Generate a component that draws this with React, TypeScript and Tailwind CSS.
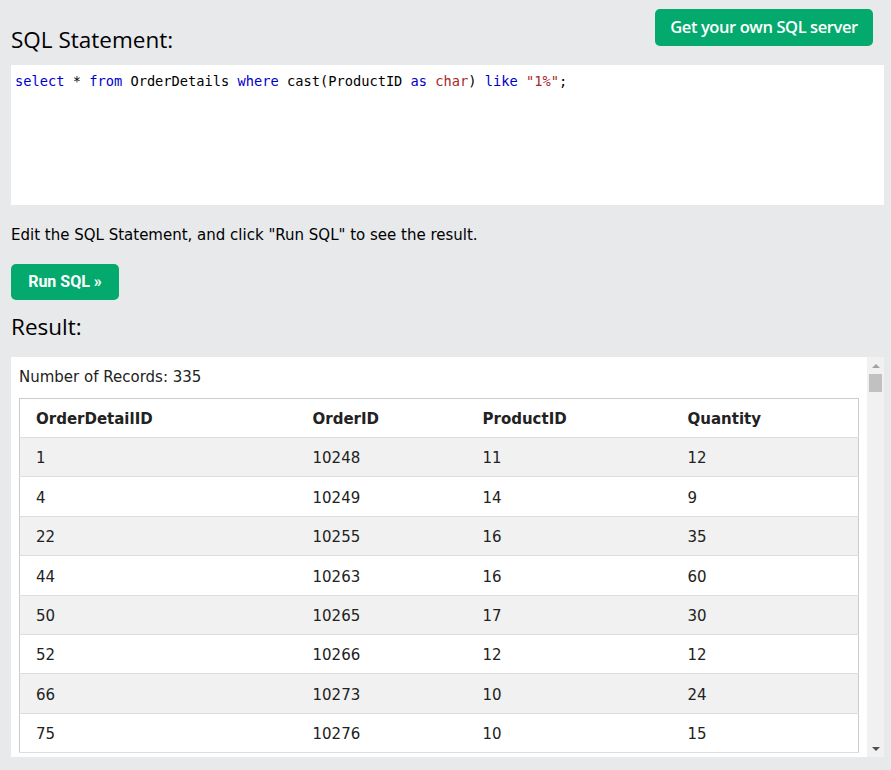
const rows = [
  ["1", "10248", "11", "12"],
  ["4", "10249", "14", "9"],
  ["22", "10255", "16", "35"],
  ["44", "10263", "16", "60"],
  ["50", "10265", "17", "30"],
  ["52", "10266", "12", "12"],
  ["66", "10273", "10", "24"],
  ["75", "10276", "10", "15"],
];

const verdana = { fontFamily: "Verdana, 'DejaVu Sans', sans-serif" };

export default function App() {
  return (
    <div className="min-h-[770px] bg-[#e7e9eb] pl-[11px] pr-[7px] text-black" style={verdana}>
      <div className="flex justify-between h-[56px]">
        <h2 className="mt-[23px] text-[22.5px] leading-[33px] font-normal" style={{ fontFamily: "'Open Sans', sans-serif" }}>
          SQL Statement:
        </h2>
        <button
          className="mt-[9px] mr-[11px] h-[37px] w-[218px] rounded-[5px] bg-[#04aa6d] text-white text-[16.5px] font-semibold tracking-[-0.4px]"
          style={{ fontFamily: "'Open Sans', sans-serif" }}
        >
          Get your own SQL server
        </button>
      </div>

      <div className="mt-[9px] h-[140px] bg-white px-[4px] pt-[7px] text-[13.7px] leading-[18px]" style={{ fontFamily: "'DejaVu Sans Mono', 'Liberation Mono', monospace" }}>
        <span className="text-[#0000cd]">select</span> * <span className="text-[#0000cd]">from</span> OrderDetails{" "}
        <span className="text-[#0000cd]">where</span> cast(ProductID <span className="text-[#0000cd]">as</span>{" "}
        <span className="text-[#a52a2a]">char</span>) <span className="text-[#0000cd]">like</span>{" "}
        <span className="text-[#a52a2a]">"1%"</span>;
      </div>

      <p className="mt-[20px] text-[15px] leading-[20px]">Edit the SQL Statement, and click "Run SQL" to see the result.</p>

      <button
        className="mt-[19px] h-[36px] w-[108px] rounded-[5px] bg-[#04aa6d] text-white text-[16px] font-bold"
        style={{ fontFamily: "Roboto, sans-serif" }}
      >
        Run SQL »
      </button>

      <h2 className="mt-[10px] text-[22.5px] leading-[33px]" style={{ fontFamily: "'Open Sans', sans-serif" }}>
        Result:
      </h2>

      <div className="mt-[14px] h-[400px] bg-white flex overflow-hidden">
        <div className="flex-1 pl-[8px] pr-[8px] pt-[10px] overflow-hidden">
          <p className="text-[15px] leading-[20px] text-[#222]">Number of Records: 335</p>
          <table className="mt-[11px] w-[840px] border border-[#cccccc] border-collapse text-[15px] text-[#222]">
            <thead>
              <tr className="h-[39px] border-b border-[#dddddd]">
                <th className="w-[277px] pl-[16px] pt-[2px] text-left font-bold">OrderDetailID</th>
                <th className="w-[170px] pl-[16px] pt-[2px] text-left font-bold">OrderID</th>
                <th className="w-[205px] pl-[16px] pt-[2px] text-left font-bold">ProductID</th>
                <th className="pl-[16px] pt-[2px] text-left font-bold">Quantity</th>
              </tr>
            </thead>
            <tbody>
              {rows.map((r, i) => (
                <tr key={i} className={`h-[39.4px] border-b border-[#dddddd] ${i % 2 === 0 ? "bg-[#f1f1f1]" : "bg-white"}`}>
                  {r.map((c, j) => (
                    <td key={j} className="pl-[16px] pt-[3px]">{c}</td>
                  ))}
                </tr>
              ))}
            </tbody>
          </table>
        </div>
        <div className="w-[17px] bg-[#f1f1f1] flex flex-col items-center">
          <div className="h-[17px] flex items-center justify-center">
            <div className="w-0 h-0 border-l-[4px] border-r-[4px] border-b-[4px] border-l-transparent border-r-transparent border-b-[#a3a3a3]" />
          </div>
          <div className="w-[13px] h-[18px] bg-[#c1c1c1]" />
          <div className="flex-1" />
          <div className="h-[17px] flex items-center justify-center">
            <div className="w-0 h-0 border-l-[4px] border-r-[4px] border-t-[4px] border-l-transparent border-r-transparent border-t-[#505050]" />
          </div>
        </div>
      </div>
    </div>
  );
}
